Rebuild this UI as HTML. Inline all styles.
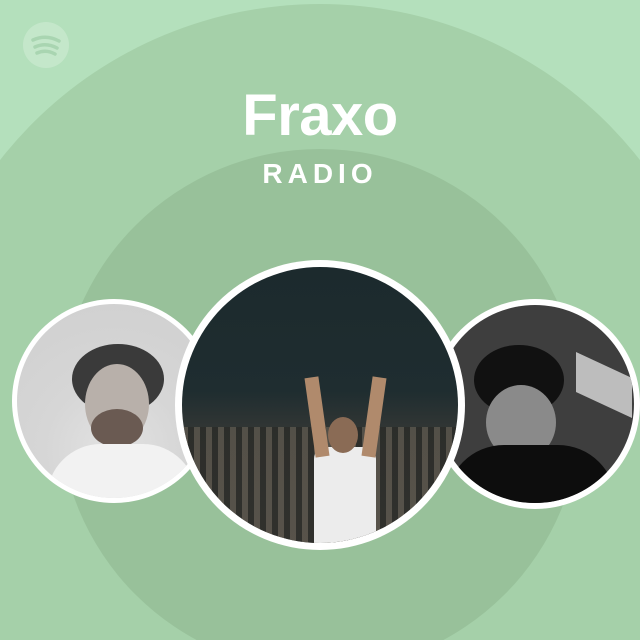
<!DOCTYPE html>
<html><head><style>
html,body{margin:0;padding:0;width:640px;height:640px;overflow:hidden}
#w{position:relative;width:640px;height:640px;overflow:hidden;background:#b4e0bc;font-family:"Liberation Sans",sans-serif}
.c{position:absolute;border-radius:50%}
.t{position:absolute;left:0;width:640px;text-align:center;color:#fff;font-weight:bold}
</style></head><body><div id="w">
<svg style="position:absolute;left:0;top:0" width="640" height="640" viewBox="0 0 640 640">
<circle cx="320" cy="410" r="406" fill="#a5d0a9"/>
<circle cx="320" cy="410" r="261" fill="#98c19a"/>
<circle cx="46" cy="45" r="23" fill="#fff" fill-opacity="0.22"/>
<path d="M33 40 Q46 34 59 41 M35 47 Q46 42 57 48 M37 53 Q46 49 55 54" stroke="#a9d5b1" stroke-width="3.5" fill="none" stroke-linecap="round"/>
</svg>
<div class="t" style="top:82px;font-size:58px;letter-spacing:-0.5px">Fraxo</div>
<div class="t" style="top:158px;font-size:28px;letter-spacing:5px">RADIO</div>
<div class="c" style="left:12px;top:299px;width:204px;height:204px;background:#fff"></div>
<div class="c" style="left:17px;top:304px;width:194px;height:194px;background:radial-gradient(circle at 50% 75%,#e2e2e2 0,#d6d6d6 40%,#cfcfcf 100%);overflow:hidden">
 <div class="c" style="left:55px;top:40px;width:92px;height:70px;background:#3a3a3a"></div>
 <div class="c" style="left:68px;top:60px;width:64px;height:80px;background:#b8b0aa"></div>
 <div class="c" style="left:74px;top:105px;width:52px;height:38px;background:#6a5a52"></div>
 <div style="position:absolute;left:30px;top:140px;width:150px;height:54px;border-radius:75px 75px 0 0;background:#f2f2f2"></div>
</div>
<div class="c" style="left:430px;top:299px;width:210px;height:210px;background:#fff"></div>
<div class="c" style="left:436px;top:305px;width:198px;height:198px;background:#3e3e3e;overflow:hidden">
 <div class="c" style="left:38px;top:40px;width:90px;height:70px;background:#111"></div>
 <div class="c" style="left:50px;top:80px;width:70px;height:75px;background:#8a8a8a"></div>
 <div style="position:absolute;left:10px;top:140px;width:170px;height:58px;border-radius:85px 85px 0 0;background:#0d0d0d"></div>
 <div style="position:absolute;left:140px;top:60px;width:56px;height:40px;background:#bdbdbd;transform:skewY(25deg)"></div>
</div>
<div class="c" style="left:175px;top:260px;width:290px;height:290px;background:#fff"></div>
<div class="c" style="left:182px;top:267px;width:276px;height:276px;background:linear-gradient(#1c2a2d 0,#1f2d30 45%,#3a3a36 65%,#4a4640 100%);overflow:hidden">
 <div style="position:absolute;left:0;top:160px;width:276px;height:116px;background:repeating-linear-gradient(90deg,#5b564d 0 6px,#2a2b28 6px 12px);opacity:.8"></div>
 <div style="position:absolute;left:132px;top:180px;width:62px;height:96px;background:#ececec;border-radius:12px 12px 0 0"></div>
 <div class="c" style="left:146px;top:150px;width:30px;height:36px;background:#8a6b55"></div>
 <div style="position:absolute;left:128px;top:110px;width:14px;height:80px;background:#b08a6c;transform:rotate(-8deg)"></div>
 <div style="position:absolute;left:185px;top:110px;width:14px;height:80px;background:#b08a6c;transform:rotate(8deg)"></div>
</div>
</div></body></html>
